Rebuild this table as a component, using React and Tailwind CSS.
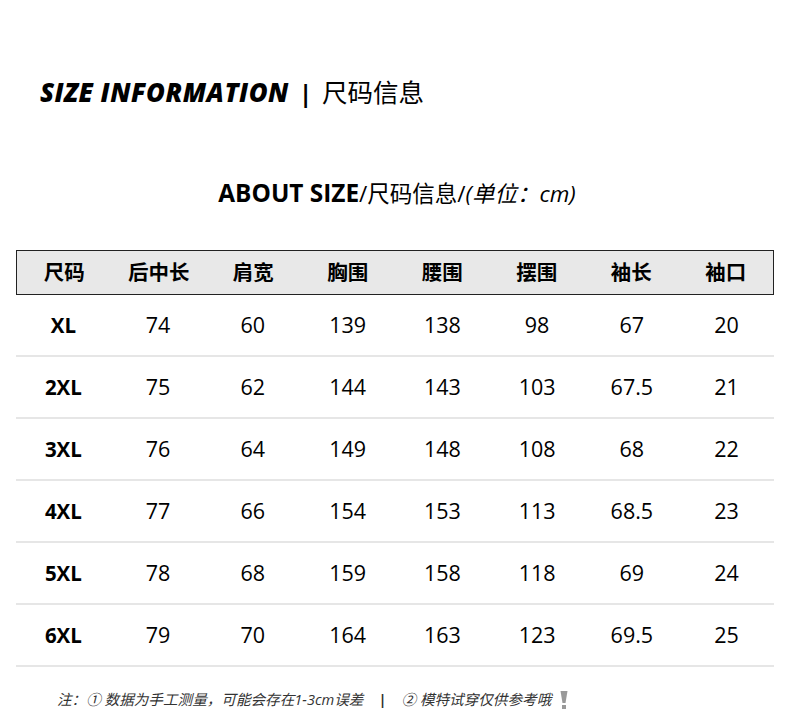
import React from 'react';

const headers = ['尺码', '后中长', '肩宽', '胸围', '腰围', '摆围', '袖长', '袖口'];

const rows = [
  ['XL', '74', '60', '139', '138', '98', '67', '20'],
  ['2XL', '75', '62', '144', '143', '103', '67.5', '21'],
  ['3XL', '76', '64', '149', '148', '108', '68', '22'],
  ['4XL', '77', '66', '154', '153', '113', '68.5', '23'],
  ['5XL', '78', '68', '159', '158', '118', '69', '24'],
  ['6XL', '79', '70', '164', '163', '123', '69.5', '25'],
];

const sans = { fontFamily: '"Open Sans", "Noto Sans CJK SC", sans-serif' };

const App = () => {
  return (
    <div className="w-[790px] h-[710px] bg-white text-black overflow-hidden" style={sans}>
      {/* Title */}
      <div className="flex items-center pt-[74px] pl-[40px] h-[112px]">
        <span className="text-[25.7px] font-black italic tracking-[0.5px] leading-none">SIZE INFORMATION</span>
        <span className="text-[24px] font-bold leading-none ml-[10px]">|</span>
        <span className="text-[25.5px] leading-none ml-[10px]">尺码信息</span>
      </div>

      {/* Sub title */}
      <div className="flex justify-center items-baseline mt-[69px] h-[28px] pl-[4px]">
        <span className="text-[24.4px] font-bold leading-none">ABOUT SIZE</span>
        <span className="text-[22.5px] leading-none">/尺码信息/</span>
        <span className="text-[22.5px] italic leading-none">(单位：cm)</span>
      </div>

      {/* Table */}
      <div className="mx-[16px] mt-[41px]">
        <div className="grid grid-cols-8 h-[45px] items-center bg-[#e8e8e8] border border-[#222]">
          {headers.map((h) => (
            <div key={h} className="text-center text-[20.5px] font-bold">{h}</div>
          ))}
        </div>
        {rows.map((r) => (
          <div key={r[0]} className="grid grid-cols-8 h-[62px] items-center border-b-2 border-[#e6e6e6]">
            {r.map((c, i) => (
              <div key={i} className={`text-center ${i === 0 ? 'font-bold text-[20.5px]' : 'text-[21.5px]'}`}>{c}</div>
            ))}
          </div>
        ))}
      </div>

      {/* Note */}
      <div className="flex items-center pl-[57px] mt-[22px] text-[14.6px] text-[#333] italic">
        <span>注：① 数据为手工测量，可能会存在1-3cm误差</span>
        <span className="not-italic font-bold mx-[15px]">|</span>
        <span>② 模特试穿仅供参考哦</span>
        <svg width="10" height="18" viewBox="0 0 10 18" className="ml-[8px]">
          <path d="M1.5 0 H8.5 L6.5 12 H3.5 Z" fill="#999" />
          <rect x="3" y="14" width="4" height="4" fill="#999" />
        </svg>
      </div>
    </div>
  );
};

export default App;
